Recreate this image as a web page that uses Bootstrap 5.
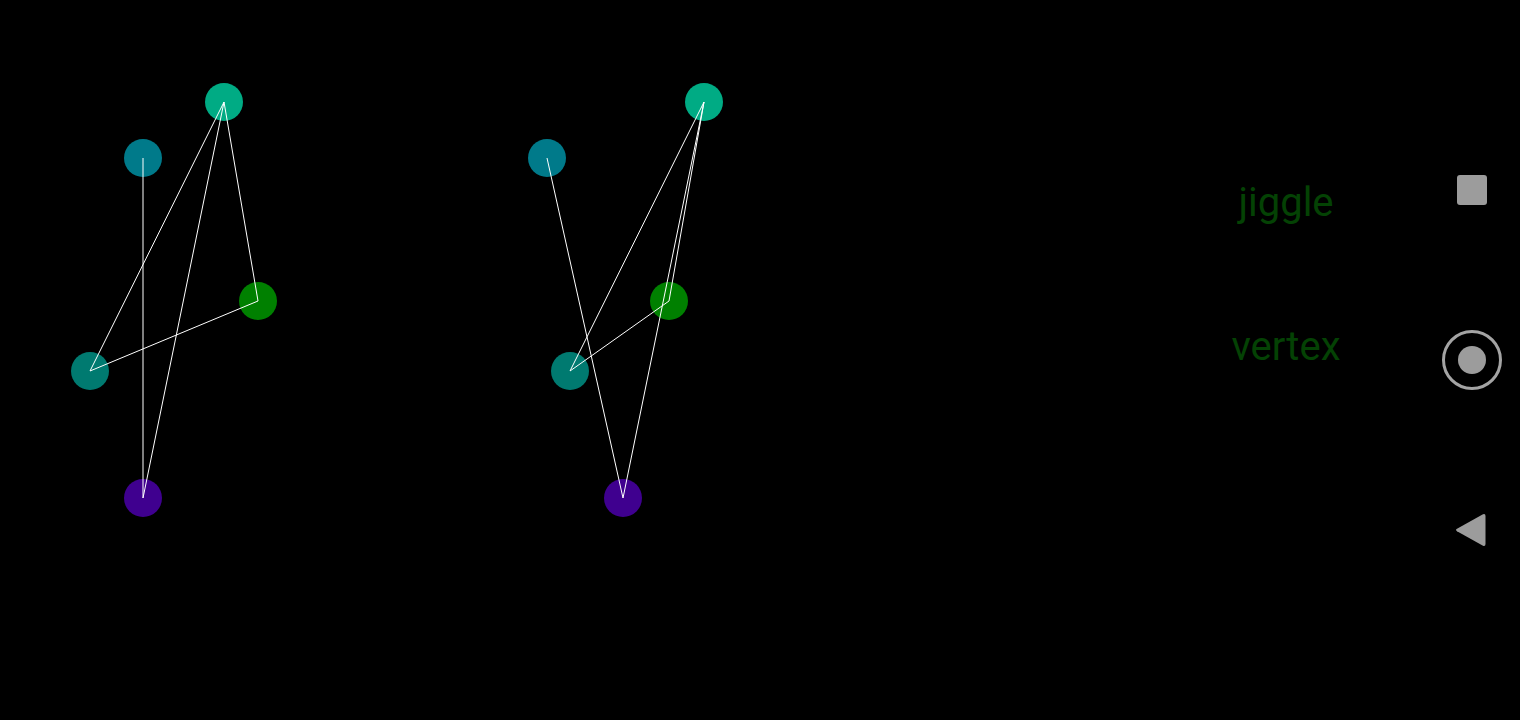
<!DOCTYPE html>
<html lang="en">
<head>
  <meta charset="UTF-8">
  <title>jiggle vertex</title>
  <link href="https://cdn.jsdelivr.net/npm/bootstrap@5.3.0/dist/css/bootstrap.min.css" rel="stylesheet">
  <style>
    body {
      background-color: #000;
      overflow: hidden;
    }
    .app-screen {
      height: 720px;
    }
    .graph-canvas {
      flex: 0 0 1178px;
      height: 720px;
    }
    .graph-canvas line {
      stroke: #fff;
      stroke-width: 1;
    }
    .label-col {
      width: 216px;
      padding-top: 131px;
      margin-right: 30px;
    }
    .label-btn {
      height: 144px;
      font-family: Roboto, sans-serif;
      font-size: 40px;
      color: #044204;
    }
    .nav-col {
      width: 96px;
      padding-top: 105px;
    }
    .nav-slot {
      height: 170px;
    }
    .nav-square {
      width: 30px;
      height: 30px;
      background-color: #9c9c9c;
      border-radius: 3px;
    }
    .nav-ring {
      width: 60px;
      height: 60px;
      border: 3px solid #a4a4a4;
      border-radius: 50%;
    }
    .nav-dot {
      width: 28px;
      height: 28px;
      background-color: #9c9c9c;
      border-radius: 50%;
    }
  </style>
</head>
<body>
  <div class="app-screen d-flex">
    <svg class="graph-canvas" viewBox="0 0 1178 720" xmlns="http://www.w3.org/2000/svg">
      <!-- left graph -->
      <circle cx="224" cy="102" r="19" fill="#00ab84"/>
      <circle cx="143" cy="158" r="19" fill="#007a8a"/>
      <circle cx="258" cy="301" r="19" fill="#008000"/>
      <circle cx="90" cy="371" r="19" fill="#007a70"/>
      <circle cx="143" cy="498" r="19" fill="#3f008f"/>
      <line x1="224" y1="102" x2="90" y2="371"/>
      <line x1="224" y1="102" x2="143" y2="498"/>
      <line x1="224" y1="102" x2="258" y2="301"/>
      <line x1="258" y1="301" x2="90" y2="371"/>
      <line x1="143" y1="158" x2="143" y2="498"/>
      <!-- right graph -->
      <circle cx="704" cy="102" r="19" fill="#00ab84"/>
      <circle cx="547" cy="158" r="19" fill="#007a8a"/>
      <circle cx="669" cy="301" r="19" fill="#008000"/>
      <circle cx="570" cy="371" r="19" fill="#007a70"/>
      <circle cx="623" cy="498" r="19" fill="#3f008f"/>
      <line x1="704" y1="102" x2="570" y2="371"/>
      <line x1="704" y1="102" x2="623" y2="498"/>
      <line x1="704" y1="102" x2="669" y2="301"/>
      <line x1="669" y1="301" x2="570" y2="371"/>
      <line x1="547" y1="158" x2="623" y2="498"/>
    </svg>
    <div class="label-col d-flex flex-column">
      <div class="label-btn d-flex align-items-center justify-content-center">jiggle</div>
      <div class="label-btn d-flex align-items-center justify-content-center">vertex</div>
    </div>
    <div class="nav-col d-flex flex-column">
      <div class="nav-slot d-flex align-items-center justify-content-center">
        <div class="nav-square"></div>
      </div>
      <div class="nav-slot d-flex align-items-center justify-content-center">
        <div class="nav-ring d-flex align-items-center justify-content-center">
          <div class="nav-dot"></div>
        </div>
      </div>
      <div class="nav-slot d-flex align-items-center justify-content-center">
        <svg width="32" height="34" viewBox="-2 0 32 34" xmlns="http://www.w3.org/2000/svg">
          <path d="M-2 17 Q-2 16.4 -1 15.8 L25 1.2 Q27.5 0.3 27.5 3 L27.5 31 Q27.5 33.7 25 32.8 L-1 18.2 Q-2 17.6 -2 17 Z" fill="#9c9c9c"/>
        </svg>
      </div>
    </div>
  </div>
  <script src="https://cdn.jsdelivr.net/npm/bootstrap@5.3.0/dist/js/bootstrap.bundle.min.js"></script>
</body>
</html>
